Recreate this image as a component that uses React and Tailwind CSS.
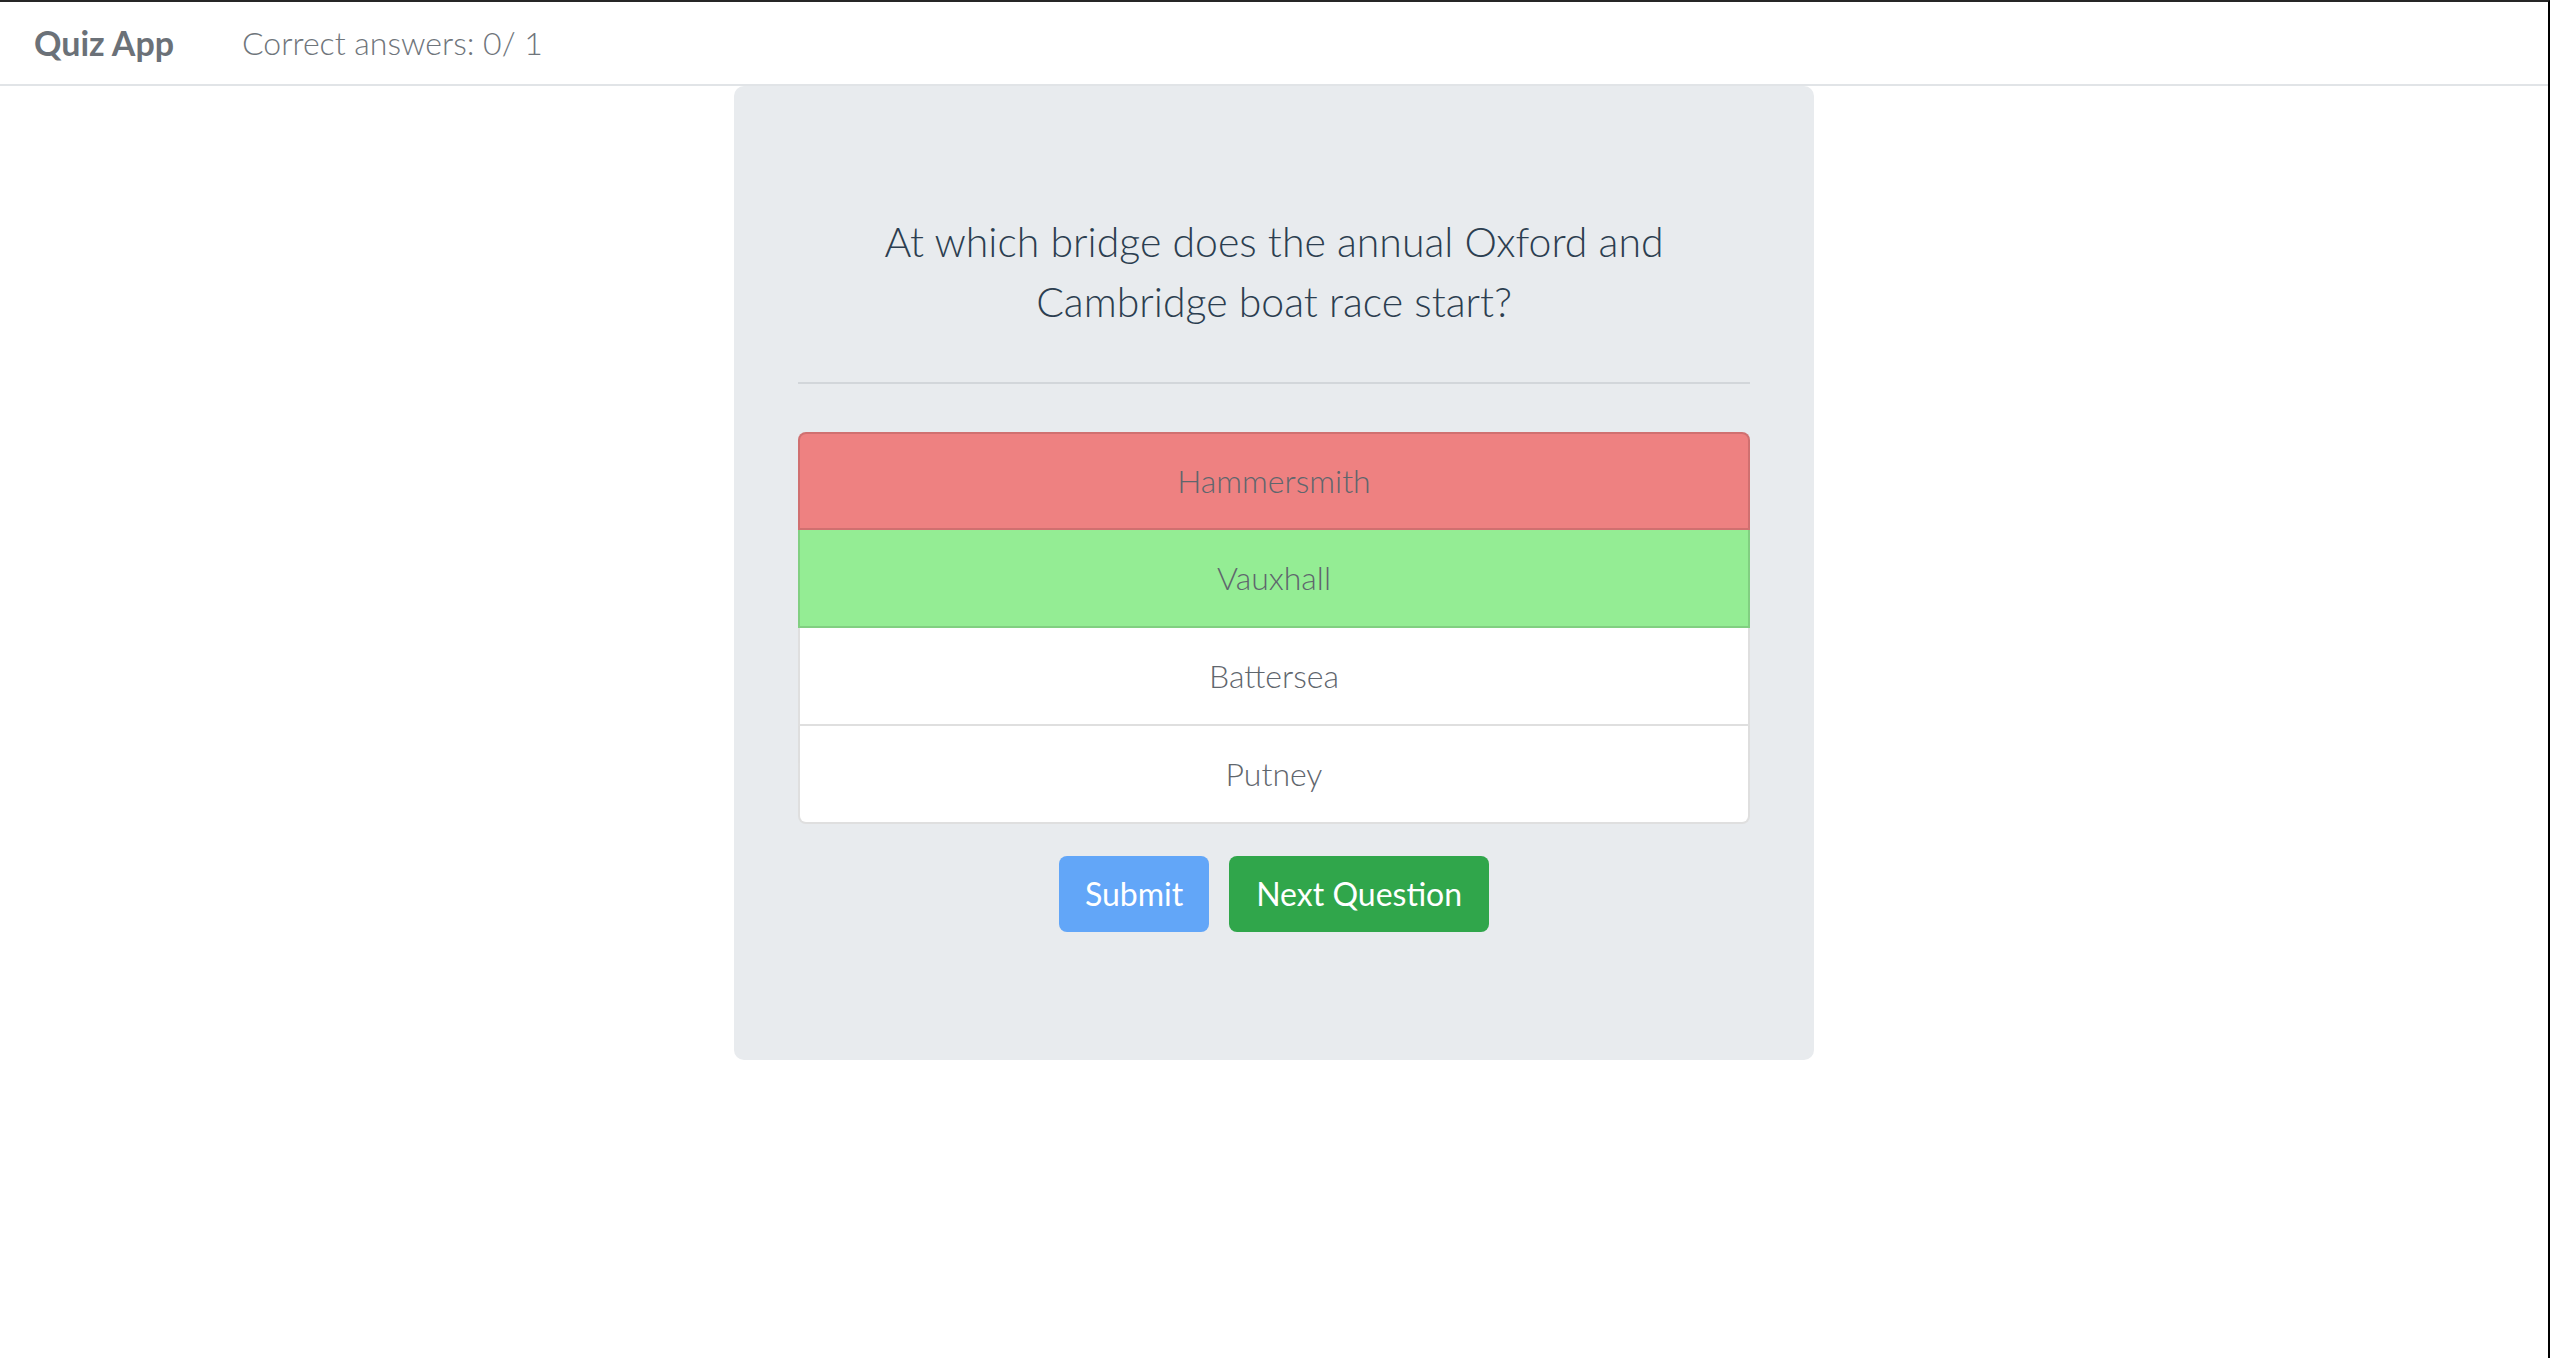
import React from "react";

const answers = [
  { text: "Hammersmith", cls: "bg-[#ee8181] rounded-t-[8px]" },
  { text: "Vauxhall", cls: "bg-[#94ed94]" },
  { text: "Battersea", cls: "bg-white" },
  { text: "Putney", cls: "bg-white rounded-b-[8px]" },
];

export default function App() {
  return (
    <div
      className="min-h-[1358px] w-full bg-white border-t-2 border-r-2 border-t-[#262626] border-r-black flex flex-col"
      style={{ fontFamily: "Lato, 'Open Sans', 'Liberation Sans', sans-serif" }}
    >
      <nav className="h-[84px] flex items-center pl-[34px] border-b-2 border-[#e1e4e7] bg-white shrink-0">
        <span className="text-[34px] font-bold text-[#6b7178] leading-none">Quiz App</span>
        <span className="ml-[68px] text-[32px] font-light text-[#6f757b] leading-none">Correct answers: 0/ 1</span>
      </nav>

      <main className="flex justify-center">
        <div className="w-[1080px] bg-[#e8ebee] rounded-[10px] px-[64px] pt-[126px] pb-[128px] flex flex-col">
          <h1 className="text-center text-[41px] leading-[60px] font-light text-[#2c3e50]">
            At which bridge does the annual Oxford and
            <br />
            Cambridge boat race start?
          </h1>
          <hr className="mt-[50px] border-0 h-[2px] bg-[#d2d6da]" />
          <ul className="mt-[48px] flex flex-col">
            {answers.map((a, i) => (
              <li
                key={a.text}
                className={`h-[98px] flex items-center justify-center text-[32px] font-light text-[#5f666d] border-2 border-[rgba(0,0,0,0.125)] ${
                  i > 0 ? "border-t-0" : ""
                } ${a.cls}`}
              >
                {a.text}
              </li>
            ))}
          </ul>
          <div className="mt-[32px] flex justify-center gap-[20px]">
            <button className="h-[76px] px-[26px] rounded-[8px] bg-[#62a6f8] text-white text-[32px]">
              Submit
            </button>
            <button className="h-[76px] px-[27px] rounded-[8px] bg-[#30a64b] text-white text-[32px]">
              Next Question
            </button>
          </div>
        </div>
      </main>
    </div>
  );
}
